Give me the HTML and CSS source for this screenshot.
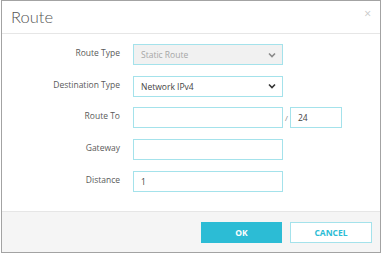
FILE: index.html
```html
<!DOCTYPE html>
<html>
<head>
<meta charset="utf-8">
<link rel="stylesheet" href="styles.css">
</head>
<body>
<div class="dialog">
  <div class="header">
    <div class="title">Route</div>
    <div class="close">×</div>
  </div>
  <div class="body">
    <div class="row">
      <div class="label">Route Type</div>
      <div class="select disabled">
        <span>Static Route</span>
        <svg width="8" height="6" viewBox="0 0 8 6"><path d="M1 1.5 L4 4.5 L7 1.5" fill="none" stroke="#8a8a8a" stroke-width="1.6"/></svg>
      </div>
    </div>
    <div class="row">
      <div class="label">Destination Type</div>
      <div class="select">
        <span>Network IPv4</span>
        <svg width="8" height="6" viewBox="0 0 8 6"><path d="M1 1.5 L4 4.5 L7 1.5" fill="none" stroke="#333" stroke-width="1.6"/></svg>
      </div>
    </div>
    <div class="row">
      <div class="label">Route To</div>
      <div class="input"></div>
      <div class="prefix"><span class="slash">/</span><div class="input small">24</div></div>
    </div>
    <div class="row">
      <div class="label">Gateway</div>
      <div class="input"></div>
    </div>
    <div class="row">
      <div class="label">Distance</div>
      <div class="input">1</div>
    </div>
  </div>
  <div class="footer">
    <div class="btn ok">OK</div>
    <div class="btn cancel">CANCEL</div>
  </div>
</div>
</body>
</html>
```
FILE: styles.css
```css
html, body { margin: 0; padding: 0; background: #fff; }
body { font-family: "Open Sans", "Liberation Sans", sans-serif; }
.dialog {
  box-sizing: border-box;
  margin-left: 1px;
  width: 380px;
  height: 253px;
  border: 1px solid #a3a3a3;
  display: flex;
  flex-direction: column;
  background: #fff;
}
.header {
  height: 33px;
  box-sizing: border-box;
  border-bottom: 1px solid #e6e6e6;
  display: flex;
  align-items: center;
  justify-content: space-between;
  padding: 0 9px 0 9px;
}
.title {
  font-family: Lato, "Open Sans", sans-serif;
  font-weight: 300;
  font-size: 16.5px;
  color: #555;
  margin-top: -1px;
}
.close { color: #c8c8c8; font-size: 12px; margin-top: -7px; }
.body {
  flex: 1;
  padding-top: 10px;
  display: flex;
  flex-direction: column;
  gap: 10.7px;
}
.row {
  display: grid;
  grid-template-columns: 118px 150px auto;
  column-gap: 13px;
  align-items: center;
  height: 21px;
}
.label {
  text-align: right;
  font-size: 8.5px;
  color: #5a5a5a;
  margin-top: -4px;
}
.select, .input {
  box-sizing: border-box;
  height: 21px;
  border: 1px solid #a4e2eb;
  font-size: 8.5px;
  color: #444;
  display: flex;
  align-items: center;
  padding: 0 6px 0 7px;
  background: #fff;
}
.select { justify-content: space-between; }
.select.disabled { background: #f1f1f1; color: #a6a6a6; }
.prefix {
  display: flex;
  align-items: center;
  margin-left: -13px;
}
.slash { font-size: 8px; color: #888; width: 7px; text-align: center; margin-top: -1px; }
.input.small { width: 52px; }
.footer {
  height: 41px;
  box-sizing: border-box;
  border-top: 1px solid #e6e6e6;
  background: #f5f5f5;
  display: flex;
  justify-content: flex-end;
  align-items: center;
  gap: 8px;
  padding-right: 8px;
}
.btn {
  box-sizing: border-box;
  width: 81px;
  height: 21px;
  display: flex;
  align-items: center;
  justify-content: center;
  font-size: 8.5px;
  font-weight: bold;
}
.ok { background: #2cbcd5; color: #fff; }
.cancel { background: #fff; border: 1px solid #a4e2eb; color: #2cbcd5; width: 82px; }
```
